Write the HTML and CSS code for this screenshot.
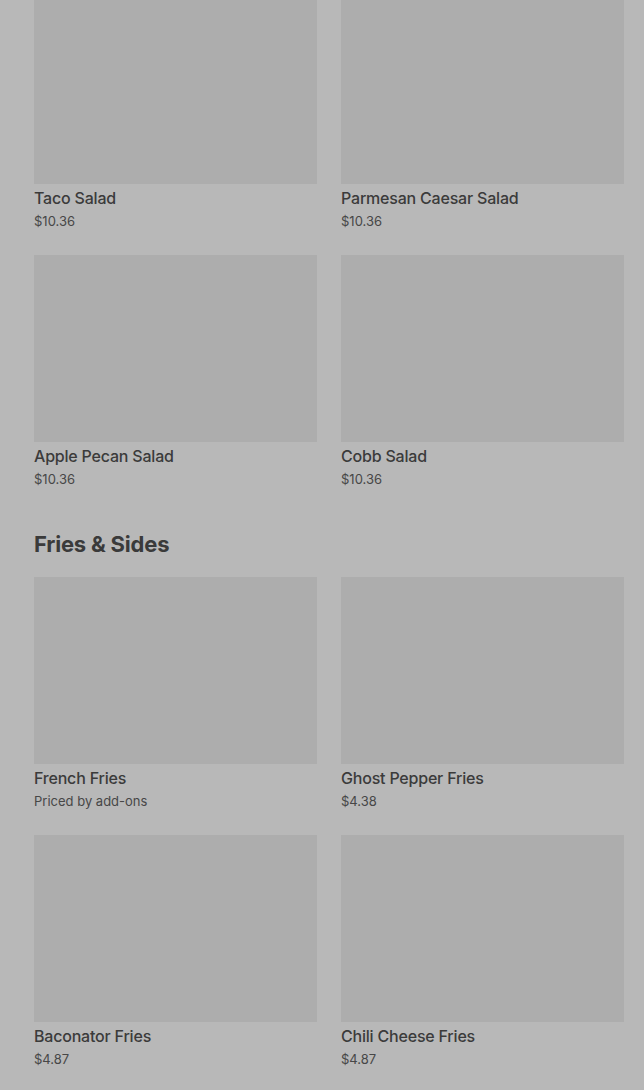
FILE: index.html
```html
<!DOCTYPE html>
<html lang="en">
<head>
  <meta charset="UTF-8">
  <meta name="viewport" content="width=device-width, initial-scale=1.0">
  <title>Menu</title>
  <link rel="stylesheet" href="styles.css">
</head>
<body>
  <main class="menu">
    <section class="section">
      <div class="grid">
        <div class="item">
          <div class="thumb"></div>
          <div class="name">Taco Salad</div>
          <div class="price">$10.36</div>
        </div>
        <div class="item">
          <div class="thumb"></div>
          <div class="name">Parmesan Caesar Salad</div>
          <div class="price">$10.36</div>
        </div>
        <div class="item">
          <div class="thumb"></div>
          <div class="name">Apple Pecan Salad</div>
          <div class="price">$10.36</div>
        </div>
        <div class="item">
          <div class="thumb"></div>
          <div class="name">Cobb Salad</div>
          <div class="price">$10.36</div>
        </div>
      </div>
    </section>

    <section class="section">
      <h2 class="section-title">Fries &amp; Sides</h2>
      <div class="grid">
        <div class="item">
          <div class="thumb"></div>
          <div class="name">French Fries</div>
          <div class="price">Priced by add-ons</div>
        </div>
        <div class="item">
          <div class="thumb"></div>
          <div class="name">Ghost Pepper Fries</div>
          <div class="price">$4.38</div>
        </div>
        <div class="item">
          <div class="thumb"></div>
          <div class="name">Baconator Fries</div>
          <div class="price">$4.87</div>
        </div>
        <div class="item">
          <div class="thumb"></div>
          <div class="name">Chili Cheese Fries</div>
          <div class="price">$4.87</div>
        </div>
        <div class="item">
          <div class="thumb"></div>
        </div>
        <div class="item">
          <div class="thumb"></div>
        </div>
      </div>
    </section>
  </main>
</body>
</html>
```

FILE: styles.css
```css
body {
  margin: 0;
  background: #b8b8b8;
  font-family: Inter, "Noto Sans", sans-serif;
  color: #3a3a3a;
  overflow: hidden;
}

.menu {
  padding: 0 20px 0 34px;
  margin-top: -3px; /* page is scrolled a little */
}

.section {
  margin-bottom: 42px;
}

.section-title {
  margin: 0 0 19px;
  font-size: 22px;
  line-height: 28px;
  font-weight: 700;
  letter-spacing: -0.2px;
  color: #3a3a3a;
}

.grid {
  display: grid;
  grid-template-columns: 1fr 1fr;
  column-gap: 24px;
  row-gap: 25px;
}

.item {
  display: flex;
  flex-direction: column;
}

.thumb {
  height: 187px;
  background: #adadad;
}

.name {
  margin-top: 4px;
  font-size: 16px;
  line-height: 20px;
  font-weight: 500;
  letter-spacing: -0.2px;
  color: #3b3b3b;
}

.price {
  margin-top: 4px;
  font-size: 13px;
  line-height: 18px;
  color: #474747;
}
```
